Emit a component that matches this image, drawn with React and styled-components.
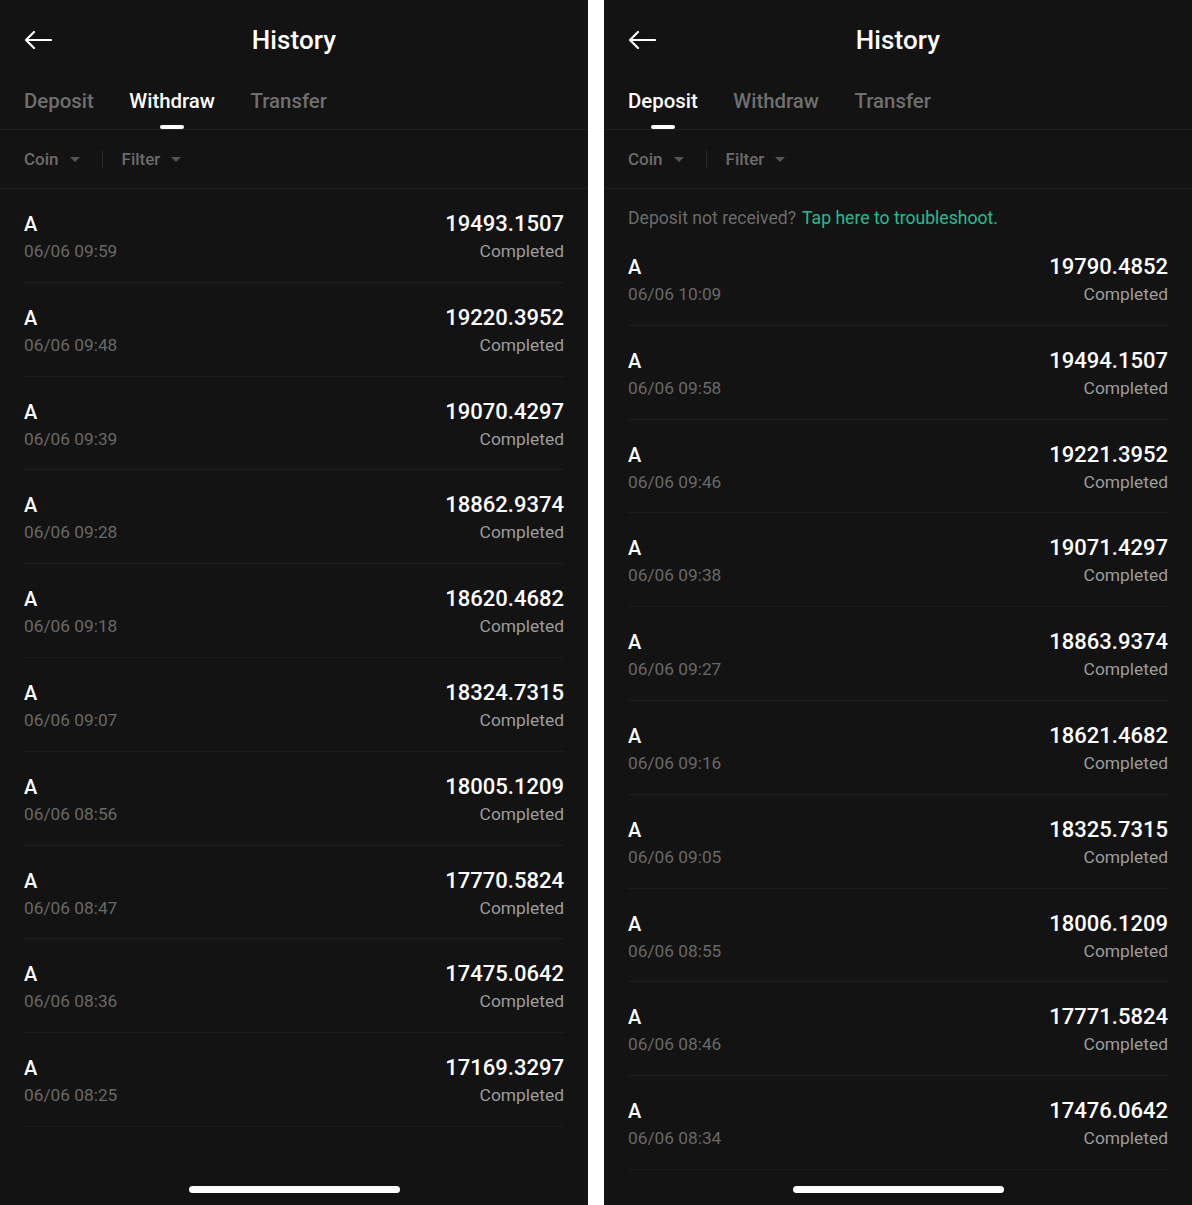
import React from 'react';
import styled, { createGlobalStyle } from 'styled-components';

const GlobalStyle = createGlobalStyle`
  html, body {
    margin: 0;
    padding: 0;
    background: #ffffff;
  }
  body {
    font-family: Roboto, "Noto Sans", "Liberation Sans", sans-serif;
  }
`;

const Page = styled.div`
  display: flex;
  gap: 16px;
  width: 1192px;
  height: 1205px;
`;

const Phone = styled.div`
  position: relative;
  width: 588px;
  height: 1205px;
  background: #131313;
  display: flex;
  flex-direction: column;
  overflow: hidden;
`;

const Header = styled.div`
  height: 80px;
  display: grid;
  grid-template-columns: 1fr auto 1fr;
  align-items: center;
  padding: 0 24px;
`;

const BackButton = styled.div`
  display: flex;
  align-items: center;
  color: #ffffff;
`;

const Title = styled.div`
  color: #ffffff;
  font-size: 26px;
  font-weight: 500;
  letter-spacing: 0.1px;
`;

const TabBar = styled.div`
  height: 49px;
  display: flex;
  gap: 35.5px;
  padding: 0 24px;
  border-bottom: 1px solid #232323;
`;

const Tab = styled.div`
  position: relative;
  padding-top: 9px;
  font-size: 20.4px;
  line-height: 24px;
  font-weight: 500;
  color: ${(p) => (p.active ? '#ffffff' : '#6f6f6f')};

  &::after {
    content: '';
    display: ${(p) => (p.active ? 'block' : 'none')};
    position: absolute;
    left: 50%;
    bottom: 0;
    width: 24px;
    height: 4px;
    margin-left: -12px;
    border-radius: 2px;
    background: #ffffff;
  }
`;

const FilterBar = styled.div`
  height: 58px;
  display: flex;
  align-items: center;
  padding: 0 24px;
  border-bottom: 1px solid #1b1b1b;
`;

const FilterItem = styled.div`
  display: flex;
  align-items: center;
  gap: 11px;
  color: #6b6b6b;
  font-size: 17px;
  font-weight: 500;
`;

const Caret = styled.span`
  width: 0;
  height: 0;
  border-left: 5px solid transparent;
  border-right: 5px solid transparent;
  border-top: 5px solid #555555;
  margin-top: 1px;
`;

const Divider = styled.div`
  width: 1px;
  height: 18px;
  background: #2a2a2a;
  margin: 0 19px 0 22px;
`;

const Banner = styled.div`
  height: 43px;
  box-sizing: border-box;
  padding: 19px 24px 0;
  font-size: 17.6px;
  line-height: 20px;
  color: #6b6b6b;
`;

const Link = styled.span`
  color: #1fbf8f;
  margin-left: 6px;
`;

const List = styled.div`
  display: flex;
  flex-direction: column;
`;

const Row = styled.div`
  height: ${(p) => p.h}px;
  box-sizing: border-box;
  margin: 0 24px;
  padding-top: 23px;
  display: flex;
  justify-content: space-between;
  border-bottom: 1px solid #1d1d1d;
`;

const Col = styled.div`
  display: flex;
  flex-direction: column;
  align-items: ${(p) => (p.right ? 'flex-end' : 'flex-start')};
`;

const Coin = styled.div`
  color: #ffffff;
  font-size: 20px;
  font-weight: 500;
  line-height: 24px;
`;

const Amount = styled.div`
  color: #ffffff;
  font-size: 22px;
  font-weight: 500;
  line-height: 24px;
`;

const DateText = styled.div`
  color: #686868;
  font-size: 17.3px;
  line-height: 30px;
`;

const Status = styled.div`
  color: #9c9c9c;
  font-size: 17.4px;
  line-height: 30px;
`;

const HomeIndicator = styled.div`
  position: absolute;
  left: 189px;
  bottom: 12px;
  width: 211px;
  height: 7px;
  border-radius: 4px;
  background: #ffffff;
`;

const ArrowLeft = () => (
  <svg width="28" height="20" viewBox="0 0 28 20" fill="none">
    <path
      d="M27 10H2M10 2L2 10L10 18"
      stroke="#ffffff"
      strokeWidth="2.2"
      strokeLinecap="round"
      strokeLinejoin="round"
    />
  </svg>
);

const withdrawRows = [
  ['19493.1507', '06/06 09:59'],
  ['19220.3952', '06/06 09:48'],
  ['19070.4297', '06/06 09:39'],
  ['18862.9374', '06/06 09:28'],
  ['18620.4682', '06/06 09:18'],
  ['18324.7315', '06/06 09:07'],
  ['18005.1209', '06/06 08:56'],
  ['17770.5824', '06/06 08:47'],
  ['17475.0642', '06/06 08:36'],
  ['17169.3297', '06/06 08:25'],
];

const depositRows = [
  ['19790.4852', '06/06 10:09'],
  ['19494.1507', '06/06 09:58'],
  ['19221.3952', '06/06 09:46'],
  ['19071.4297', '06/06 09:38'],
  ['18863.9374', '06/06 09:27'],
  ['18621.4682', '06/06 09:16'],
  ['18325.7315', '06/06 09:05'],
  ['18006.1209', '06/06 08:55'],
  ['17771.5824', '06/06 08:46'],
  ['17476.0642', '06/06 08:34'],
];

const TABS = ['Deposit', 'Withdraw', 'Transfer'];

function HistoryScreen({ active, rows, banner }) {
  return (
    <Phone>
      <Header>
        <BackButton>
          <ArrowLeft />
        </BackButton>
        <Title>History</Title>
        <div />
      </Header>
      <TabBar>
        {TABS.map((t) => (
          <Tab key={t} active={t === active}>
            {t}
          </Tab>
        ))}
      </TabBar>
      <FilterBar>
        <FilterItem>
          Coin <Caret />
        </FilterItem>
        <Divider />
        <FilterItem>
          Filter <Caret />
        </FilterItem>
      </FilterBar>
      {banner && (
        <Banner>
          Deposit not received?<Link>Tap here to troubleshoot.</Link>
        </Banner>
      )}
      <List>
        {rows.map(([amount, date]) => (
          <Row key={date} h={93.8}>
            <Col>
              <Coin>A</Coin>
              <DateText>{date}</DateText>
            </Col>
            <Col right>
              <Amount>{amount}</Amount>
              <Status>Completed</Status>
            </Col>
          </Row>
        ))}
      </List>
      <HomeIndicator />
    </Phone>
  );
}

export default function App() {
  return (
    <>
      <GlobalStyle />
      <Page>
        <HistoryScreen active="Withdraw" rows={withdrawRows} />
        <HistoryScreen active="Deposit" rows={depositRows} banner />
      </Page>
    </>
  );
}
